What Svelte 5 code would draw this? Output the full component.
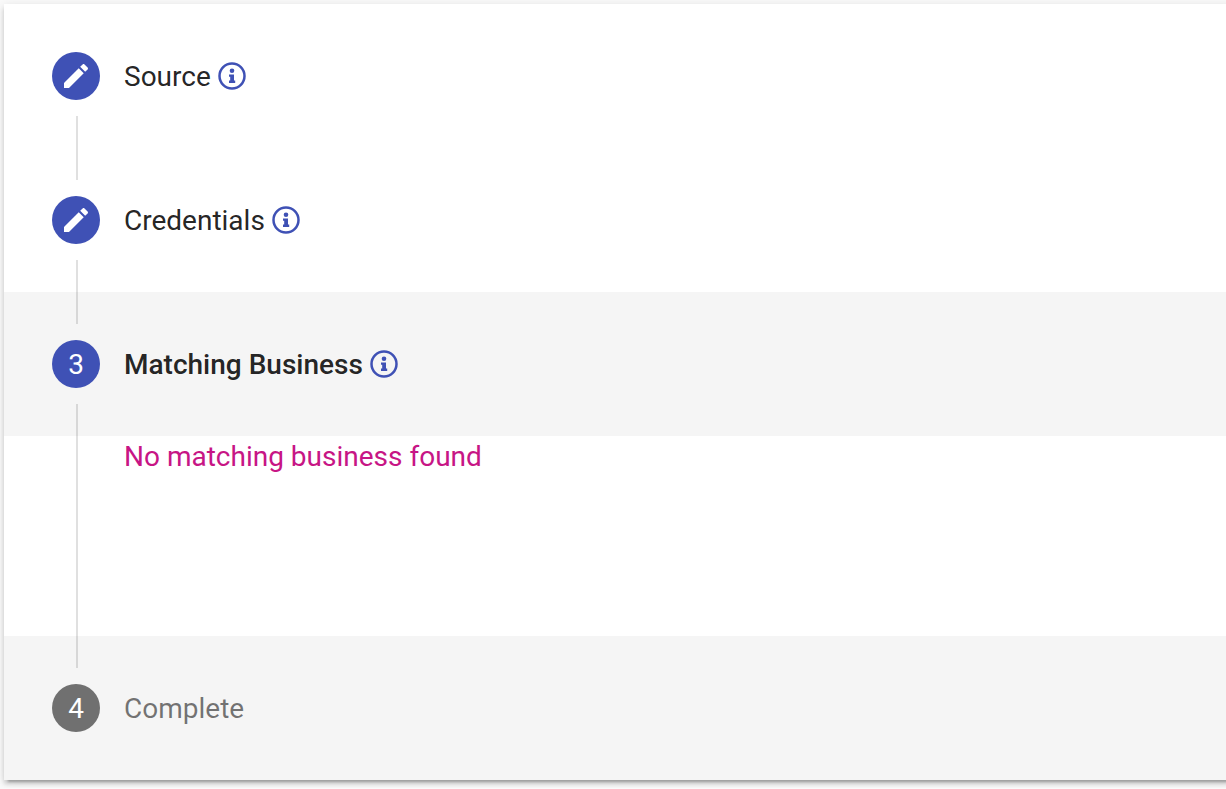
<script lang="ts">
	type Step = {
		label: string;
		state: 'edit' | 'number';
		info: boolean;
		shaded: boolean;
		message?: string;
	};

	const steps: Step[] = [
		{ label: 'Source', state: 'edit', info: true, shaded: false },
		{ label: 'Credentials', state: 'edit', info: true, shaded: false },
		{
			label: 'Matching Business',
			state: 'number',
			info: true,
			shaded: true,
			message: 'No matching business found'
		},
		{ label: 'Complete', state: 'number', info: false, shaded: true }
	];

	let selected = $state(2);
</script>

<main class="stepper">
	{#each steps as step, i (step.label)}
		<section>
			<button
				type="button"
				class="header"
				class:shaded={step.shaded}
				class:selected={selected === i}
				aria-current={selected === i ? 'step' : undefined}
				onclick={() => (selected = i)}
			>
				<span class="rail">
					<span class="line" class:hidden={i === 0}></span>
					<span class="badge" class:active={step.state === 'edit' || selected === i}>
						{#if step.state === 'edit'}
							<svg class="pencil" viewBox="0 0 24 24" aria-hidden="true">
								<path
									d="M3 17.25V21h3.75L17.81 9.94l-3.75-3.75L3 17.25zM20.71 7.04c.39-.39.39-1.02 0-1.41l-2.34-2.34c-.39-.39-1.02-.39-1.41 0l-1.83 1.83 3.75 3.75 1.83-1.83z"
								/>
							</svg>
						{:else}
							{i + 1}
						{/if}
					</span>
					<span class="line" class:hidden={i === steps.length - 1}></span>
				</span>
				<span class="label" class:reached={step.state === 'edit' || selected === i}>
					{step.label}
					{#if step.info}
						<svg class="info" viewBox="0 0 28 28" aria-hidden="true">
							<circle class="ring" cx="14" cy="14" r="12.5" />
							<circle cx="14" cy="8.7" r="2.3" />
							<path d="M11 12.4h5v6.2h1.2V21H11v-2.4h1.2v-3.8H11z" />
						</svg>
					{/if}
				</span>
			</button>
			{#if step.message && selected === i}
				<div class="content">
					<p>{step.message}</p>
				</div>
			{/if}
		</section>
	{/each}
</main>

<style>
	:global(body) {
		background: #fafafa;
		overflow-x: hidden;
	}
	.stepper {
		margin: 4px -8px 8px 4px;
		background: #fff;
		font: 400 28px/41px Roboto, sans-serif;
		box-shadow:
			0 6px 2px -4px rgba(0, 0, 0, 0.2),
			0 4px 4px 0 rgba(0, 0, 0, 0.14),
			0 2px 10px 0 rgba(0, 0, 0, 0.12);
	}
	.header {
		display: flex;
		align-items: center;
		gap: 24px;
		width: 100%;
		height: 144px;
		padding: 0 48px;
		border: 0;
		background: none;
		font: inherit;
		text-align: left;
		color: rgba(0, 0, 0, 0.54);
		cursor: pointer;
	}
	.header.shaded {
		background: #f5f5f5;
	}
	.header.selected {
		font-weight: 500;
	}
	.rail {
		display: flex;
		flex-direction: column;
		align-items: center;
		gap: 16px;
		height: 100%;
	}
	.line {
		flex: 1;
		border-left: 2px solid rgba(0, 0, 0, 0.12);
		margin-left: 2px;
	}
	.line.hidden {
		visibility: hidden;
	}
	.badge {
		display: flex;
		align-items: center;
		justify-content: center;
		width: 48px;
		height: 48px;
		border-radius: 50%;
		background: #707070;
		color: #fff;
		font-weight: 400;
	}
	.badge.active {
		background: #3f51b5;
	}
	.pencil {
		width: 32px;
		height: 32px;
		fill: #fff;
	}
	.label {
		display: flex;
		align-items: center;
		gap: 7px;
	}
	.label.reached {
		color: rgba(0, 0, 0, 0.87);
	}
	.info {
		width: 28px;
		height: 28px;
		fill: #3f51b5;
	}
	.ring {
		fill: none;
		stroke: #3f51b5;
		stroke-width: 2.5;
	}
	.content {
		min-height: 200px;
		margin-left: 72px;
		padding: 0 48px 0 46px;
		border-left: 2px solid rgba(0, 0, 0, 0.12);
		box-sizing: border-box;
	}
	p {
		margin: 0;
		color: #c71585;
	}
</style>
